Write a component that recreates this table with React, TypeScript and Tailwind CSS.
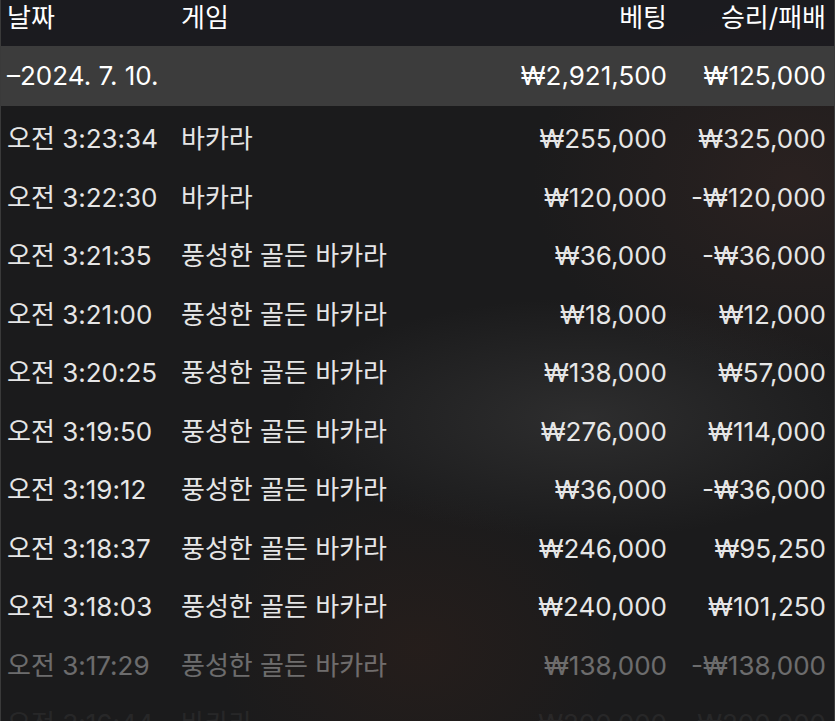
import React from 'react';

type Row = { time: string; game: string; bet: string; result: string };

const rows: Row[] = [
  { time: '오전 3:23:34', game: '바카라', bet: '₩255,000', result: '₩325,000' },
  { time: '오전 3:22:30', game: '바카라', bet: '₩120,000', result: '-₩120,000' },
  { time: '오전 3:21:35', game: '풍성한 골든 바카라', bet: '₩36,000', result: '-₩36,000' },
  { time: '오전 3:21:00', game: '풍성한 골든 바카라', bet: '₩18,000', result: '₩12,000' },
  { time: '오전 3:20:25', game: '풍성한 골든 바카라', bet: '₩138,000', result: '₩57,000' },
  { time: '오전 3:19:50', game: '풍성한 골든 바카라', bet: '₩276,000', result: '₩114,000' },
  { time: '오전 3:19:12', game: '풍성한 골든 바카라', bet: '₩36,000', result: '-₩36,000' },
  { time: '오전 3:18:37', game: '풍성한 골든 바카라', bet: '₩246,000', result: '₩95,250' },
  { time: '오전 3:18:03', game: '풍성한 골든 바카라', bet: '₩240,000', result: '₩101,250' },
  { time: '오전 3:17:29', game: '풍성한 골든 바카라', bet: '₩138,000', result: '-₩138,000' },
  { time: '오전 3:16:44', game: '바카라', bet: '₩200,000', result: '-₩200,000' },
];

// last rows fade out at the bottom edge
const fade = (i: number) => (i === 9 ? 'opacity-40' : i === 10 ? 'opacity-[0.06]' : '');

const GRID = 'grid grid-cols-[174px_1fr_160px_159px] pl-[6px] pr-[8px]';

export default function App() {
  return (
    <div
      className="relative w-[835px] h-[721px] overflow-hidden border-x border-[#3a3a3a] bg-[#1b1b1c] bg-[radial-gradient(ellipse_300px_120px_at_70%_58%,rgba(80,80,80,0.35),transparent),radial-gradient(ellipse_260px_200px_at_95%_25%,rgba(70,45,40,0.35),transparent),radial-gradient(ellipse_200px_160px_at_50%_90%,rgba(60,35,25,0.3),transparent)] text-[26px] leading-none"
      style={{ fontFamily: 'Inter, "Noto Sans CJK KR", sans-serif' }}
    >
      {/* Header */}
      <div className={`${GRID} h-[46px] items-start pt-[5px] bg-[#1c1c20]/90 text-white`}>
        <span>날짜</span>
        <span>게임</span>
        <span className="text-right">베팅</span>
        <span className="text-right">승리/패배</span>
      </div>

      {/* Date group */}
      <div className={`${GRID} h-[60px] items-center bg-[#3c3c3c] text-white`}>
        <span className="col-span-2">–2024. 7. 10.</span>
        <span className="text-right">₩2,921,500</span>
        <span className="text-right">₩125,000</span>
      </div>

      <div className="pt-[4px]">
        {rows.map((r, i) => (
          <div key={i} className={`${GRID} h-[58.5px] items-center text-[#e6e6e6] ${fade(i)}`}>
            <span>{r.time}</span>
            <span>{r.game}</span>
            <span className="text-right">{r.bet}</span>
            <span className="text-right">{r.result}</span>
          </div>
        ))}
      </div>
    </div>
  );
}
